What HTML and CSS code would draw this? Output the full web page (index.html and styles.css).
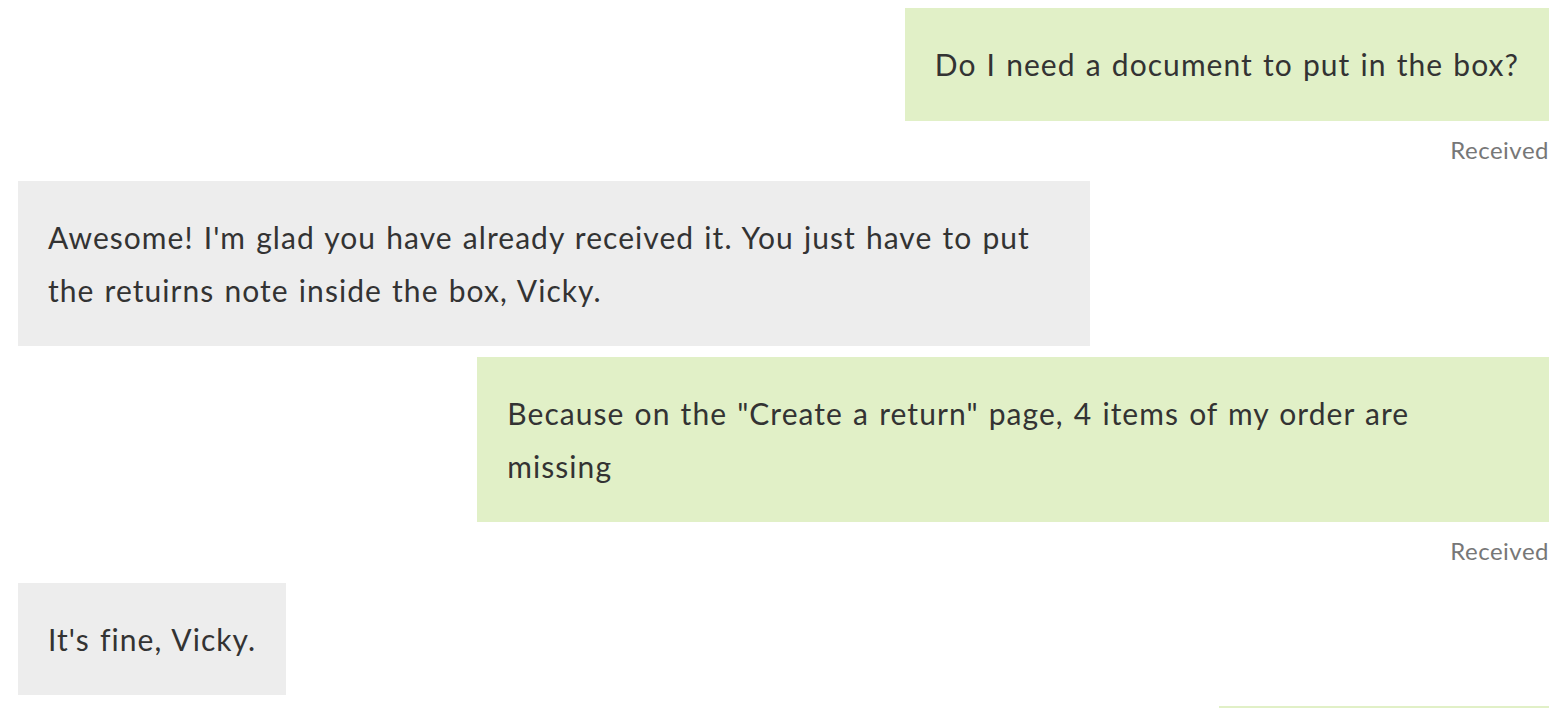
FILE: index.html
```html
<!DOCTYPE html>
<html lang="en">
<head>
  <meta charset="UTF-8" />
  <meta name="viewport" content="width=device-width, initial-scale=1" />
  <title>Conversation</title>
  <link rel="stylesheet" href="styles.css">
</head>
<body>

  <!-- Histórico da conversa -->
  <main class="chat">

    <div class="msg msg-sent">
      <div class="bubble">Do I need a document to put in the box?</div>
      <div class="status">Received</div>
    </div>

    <div class="msg msg-agent">
      <div class="bubble">Awesome! I'm glad you have already received it. You just have to put the retuirns note inside the box, Vicky.</div>
    </div>

    <div class="msg msg-sent">
      <div class="bubble">Because on the "Create a return" page, 4 items of my order are missing</div>
      <div class="status">Received</div>
    </div>

    <div class="msg msg-agent">
      <div class="bubble">It's fine, Vicky.</div>
    </div>

    <div class="msg msg-sent">
      <div class="bubble">Perfect, thank you!</div>
      <div class="status">Received</div>
    </div>

  </main>

</body>
</html>
```

FILE: styles.css
```css
* {
  box-sizing: border-box;
}

html, body {
  margin: 0;
  padding: 0;
  height: 100%;
  overflow: hidden;
  background: #fff;
  font-family: Lato, 'Noto Sans', sans-serif;
  color: #333;
}

/* Lista de mensagens */
.chat {
  display: flex;
  flex-direction: column;
  gap: 11px;
  padding: 8px 9px 0 18px;
}

.msg {
  display: flex;
  flex-direction: column;
}

.msg-sent {
  align-items: flex-end;
}

.msg-agent {
  align-items: flex-start;
}

.bubble {
  max-width: 70%;
  padding: 30px;
  font-size: 30px;
  line-height: 52.5px;
  letter-spacing: 1.05px;
  word-spacing: 1.4px;
}

.msg-sent .bubble {
  background: #e1f0c7;
}

.msg-agent .bubble {
  background: #ededed;
}

.status {
  padding: 14px 0 5.5px;
  font-size: 24px;
  line-height: 30px;
  letter-spacing: 0.5px;
  color: #777;
}
```
